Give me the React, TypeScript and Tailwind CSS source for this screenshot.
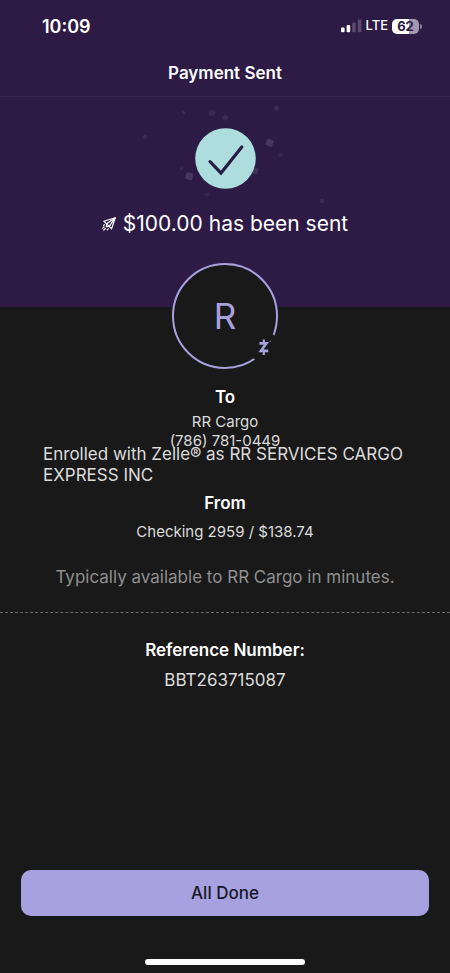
import React from "react";

function SignalIcon() {
  return (
    <svg width="21" height="14" viewBox="0 0 21 14" aria-hidden="true">
      <rect x="0" y="8.5" width="3.6" height="4.8" rx="1" fill="#fff" />
      <rect x="5.6" y="6" width="3.6" height="7.3" rx="1" fill="#fff" />
      <rect x="11.2" y="3.4" width="3.6" height="9.9" rx="1" fill="#5a4a6e" />
      <rect x="16.8" y="0.6" width="3.6" height="12.7" rx="1" fill="#5a4a6e" />
    </svg>
  );
}

function Battery() {
  return (
    <div className="flex items-center gap-px">
      <div className="flex h-[15px] w-[27px] items-center justify-center rounded-[5px] bg-linear-to-r from-white from-62% to-[#a197ae] to-62% text-[13px] leading-none font-bold text-[#2d1b45]">
        62
      </div>
      <div className="h-[5px] w-[2px] rounded-r-full bg-[#8a7f9a]" />
    </div>
  );
}

function StatusBar() {
  return (
    <div className="flex h-[52px] items-center justify-between pr-7 pl-[42px] text-white">
      <span className="text-[18px] font-semibold">10:09</span>
      <div className="flex items-center gap-1">
        <SignalIcon />
        <span className="text-[13px] font-medium">LTE</span>
        <Battery />
      </div>
    </div>
  );
}

function Confetti() {
  return (
    <svg
      className="absolute top-0 left-1/2 -translate-x-1/2"
      width="230"
      height="110"
      viewBox="-20 2 230 110"
      fill="#4a3a62"
      aria-hidden="true"
    >
      <rect x="79" y="15" width="6" height="6" rx="1" transform="rotate(20 82 18)" opacity=".45" />
      <rect x="93" y="20" width="5" height="5" rx="1" transform="rotate(30 95 22)" opacity=".55" />
      <rect x="144" y="11" width="5" height="4" rx="1" transform="rotate(15 146 13)" opacity=".6" />
      <rect x="52" y="16" width="3" height="3" rx="1" opacity=".5" />
      <rect x="13" y="40" width="4" height="4" rx="1" transform="rotate(20 15 42)" opacity=".5" />
      <rect x="136" y="44" width="7" height="7" rx="1" transform="rotate(25 139 48)" opacity=".9" />
      <rect x="149" y="58" width="4" height="4" rx="1" opacity=".4" />
      <rect x="122" y="73" width="6" height="6" rx="1" transform="rotate(15 125 76)" opacity=".7" />
      <rect x="56" y="78" width="7" height="7" rx="1" transform="rotate(15 60 81)" opacity=".9" />
      <rect x="50" y="72" width="3" height="3" rx="1" opacity=".4" />
      <rect x="75" y="98" width="4" height="3" rx="1" opacity=".4" />
      <rect x="190" y="104" width="4" height="4" rx="1" transform="rotate(20 192 106)" opacity=".6" />
    </svg>
  );
}

function CheckBadge() {
  return (
    <svg className="relative" width="61" height="61" viewBox="0 0 61 61" role="img" aria-label="Success">
      <circle cx="30.5" cy="30.5" r="30.3" fill="#addddc" />
      <path
        d="M15 33.6 L26 45 L46.8 19"
        fill="none"
        stroke="#261d45"
        strokeWidth="3.2"
        strokeLinecap="round"
        strokeLinejoin="miter"
      />
    </svg>
  );
}

function SendIcon() {
  return (
    <svg
      width="14"
      height="14"
      viewBox="0 0 14 14"
      fill="none"
      stroke="#fff"
      strokeWidth="1.2"
      strokeLinejoin="round"
      strokeLinecap="round"
      aria-hidden="true"
    >
      <path d="M13.2 0.8 L1.8 4.2 L4.6 6.8 L7.2 9.4 L9.6 11.8 Z" />
      <path d="M13.2 0.8 L4.6 6.8 M13.2 0.8 L7.2 9.4" />
      <path d="M4.6 6.8 L4.3 9.7 L7.2 9.4" />
      <path d="M2.4 7.6 L1.4 8.6 M2 10 L0.8 11.2 M3.4 11.4 L1.8 13 M6.2 11.8 L5.2 12.8" />
    </svg>
  );
}

function Avatar() {
  return (
    <div className="relative flex size-[106px] items-center justify-center rounded-full border-2 border-[#a7a2df] bg-[#191919] text-[35px] leading-none text-[#a7a2df]">
      R
      <div className="absolute right-[-4px] bottom-1 flex size-[31px] items-center justify-center rounded-full bg-[#191919]">
        <svg width="15" height="17" viewBox="0 0 15 17" role="img" aria-label="Zelle">
          <path
            d="M2.4 4.4 H9.4 L3.9 11.9 H11.2"
            fill="none"
            stroke="#a7a2df"
            strokeWidth="2.6"
            strokeLinejoin="miter"
          />
          <path d="M6.8 0.6 V4.5 M6.8 11.8 V16" stroke="#a7a2df" strokeWidth="2.2" />
          <circle cx="13.2" cy="2.2" r=".8" fill="#77739e" />
        </svg>
      </div>
    </div>
  );
}

export default function App() {
  return (
    <div className="flex min-h-screen flex-col bg-[#191919] font-['Inter','Liberation_Sans',sans-serif] text-[#dcdcdc]">
      <header className="border-b border-[#36254f] bg-[#2d1a45]">
        <StatusBar />
        <h1 className="h-11 pt-2 text-center text-[17px] leading-[26px] font-semibold text-white">Payment Sent</h1>
      </header>

      <section className="relative flex h-[210px] flex-col items-center bg-[#2d1a45] pt-[31px]">
        <Confetti />
        <CheckBadge />
        <p className="mt-[19px] flex items-center gap-[7px] text-[21px] leading-8 text-white">
          <SendIcon />
          <span>$100.00 has been sent</span>
        </p>
      </section>

      <main className="flex flex-1 flex-col">
        <div className="relative -mt-11 flex justify-center">
          <Avatar />
        </div>

        <section className="mt-[17px] px-[43px] text-center text-[15px]">
          <h2 className="text-[17px] leading-[22px] font-semibold text-white">To</h2>
          <p className="mt-1 leading-[19px]">
            RR Cargo
            <br />
            (786) 781-0449
          </p>
          <p className="-mt-1.5 text-left text-[17px] leading-[21px]">
            Enrolled with Zelle® as RR SERVICES CARGO EXPRESS INC
          </p>
          <h2 className="mt-1.5 text-[17px] leading-[22px] font-semibold text-white">From</h2>
          <p className="mt-2 leading-[19px]">Checking 2959 / $138.74</p>
        </section>

        <p className="mt-[25px] text-center text-[17px] leading-[22px] text-[#8f8f8f]">
          Typically available to RR Cargo in minutes.
        </p>

        <section className="mt-6 border-t border-dashed border-[#696969] pt-[26px] text-center text-[17px] leading-[22px]">
          <h2 className="font-semibold text-white">Reference Number:</h2>
          <p className="mt-2">BBT263715087</p>
        </section>
      </main>

      <footer className="flex flex-col items-center px-[21px] pb-2">
        <button
          type="button"
          className="h-[46px] w-full rounded-[10px] bg-[#a7a2df] pt-0.5 text-[17px] font-medium text-[#18162a]"
        >
          All Done
        </button>
        <div className="mt-[43px] h-[6px] w-40 rounded-full bg-white" />
      </footer>
    </div>
  );
}
